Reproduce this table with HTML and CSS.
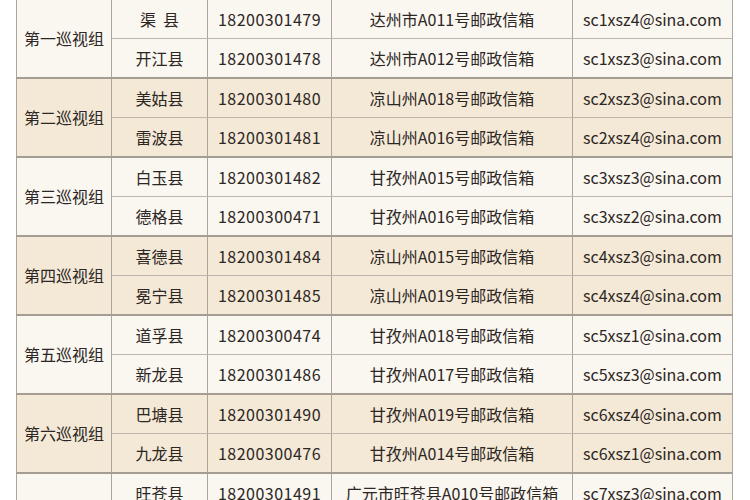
FILE: index.html
```html
<!DOCTYPE html>
<html lang="zh-CN">
<head>
<meta charset="utf-8">
<title>巡视组联系方式</title>
<link rel="stylesheet" href="styles.css">
</head>
<body>
<table class="tbl">
  <colgroup>
    <col class="c1"><col class="c2"><col class="c3"><col class="c4"><col class="c5">
  </colgroup>
  <tbody class="g odd">
    <tr><td rowspan="2">第一巡视组</td><td>渠&nbsp;&nbsp;县</td><td class="num">18200301479</td><td>达州市A011号邮政信箱</td><td>sc1xsz4@sina.com</td></tr>
    <tr><td>开江县</td><td class="num">18200301478</td><td>达州市A012号邮政信箱</td><td>sc1xsz3@sina.com</td></tr>
  </tbody>
  <tbody class="g even">
    <tr><td rowspan="2">第二巡视组</td><td>美姑县</td><td class="num">18200301480</td><td>凉山州A018号邮政信箱</td><td>sc2xsz3@sina.com</td></tr>
    <tr><td>雷波县</td><td class="num">18200301481</td><td>凉山州A016号邮政信箱</td><td>sc2xsz4@sina.com</td></tr>
  </tbody>
  <tbody class="g odd">
    <tr><td rowspan="2">第三巡视组</td><td>白玉县</td><td class="num">18200301482</td><td>甘孜州A015号邮政信箱</td><td>sc3xsz3@sina.com</td></tr>
    <tr><td>德格县</td><td class="num">18200300471</td><td>甘孜州A016号邮政信箱</td><td>sc3xsz2@sina.com</td></tr>
  </tbody>
  <tbody class="g even">
    <tr><td rowspan="2">第四巡视组</td><td>喜德县</td><td class="num">18200301484</td><td>凉山州A015号邮政信箱</td><td>sc4xsz3@sina.com</td></tr>
    <tr><td>冕宁县</td><td class="num">18200301485</td><td>凉山州A019号邮政信箱</td><td>sc4xsz4@sina.com</td></tr>
  </tbody>
  <tbody class="g odd">
    <tr><td rowspan="2">第五巡视组</td><td>道孚县</td><td class="num">18200300474</td><td>甘孜州A018号邮政信箱</td><td>sc5xsz1@sina.com</td></tr>
    <tr><td>新龙县</td><td class="num">18200301486</td><td>甘孜州A017号邮政信箱</td><td>sc5xsz3@sina.com</td></tr>
  </tbody>
  <tbody class="g even">
    <tr><td rowspan="2">第六巡视组</td><td>巴塘县</td><td class="num">18200301490</td><td>甘孜州A019号邮政信箱</td><td>sc6xsz4@sina.com</td></tr>
    <tr><td>九龙县</td><td class="num">18200300476</td><td>甘孜州A014号邮政信箱</td><td>sc6xsz1@sina.com</td></tr>
  </tbody>
  <tbody class="g odd">
    <tr><td rowspan="2">第七巡视组</td><td>旺苍县</td><td class="num">18200301491</td><td>广元市旺苍县A010号邮政信箱</td><td>sc7xsz3@sina.com</td></tr>
    <tr><td>苍溪县</td><td class="num">18200301492</td><td>广元市苍溪县A011号邮政信箱</td><td>sc7xsz4@sina.com</td></tr>
  </tbody>
</table>
</body>
</html>
```

FILE: styles.css
```css
html, body {
  margin: 0;
  padding: 0;
  background: #ffffff;
}
body {
  padding-left: 16px;
  overflow: hidden;
  font-family: "Noto Sans CJK SC", "Noto Sans", sans-serif;
}
.tbl {
  margin-top: -2.5px;
  width: 716px;
  border-collapse: collapse;
  table-layout: fixed;
  font-size: 16px;
  color: #2c2724;
}
.c1 { width: 95px; }
.c2 { width: 96px; }
.c3 { width: 124px; }
.c4 { width: 241px; }
.c5 { width: 160px; }
.tbl td {
  height: 38px;
  padding: 0;
  text-align: center;
  vertical-align: middle;
  border-left: 1px solid #aaa59d;
  border-right: 1px solid #aaa59d;
  border-top: 1px solid #bcb6ac;
  border-bottom: 1px solid #bcb6ac;
  white-space: nowrap;
  line-height: 20px;
}
.tbl td.num {
  letter-spacing: 0.5px;
}
.g {
  border-top: 2px solid #a39d94;
}
.g.odd td { background: #faf6f0; }
.g.even td { background: #f4e9d6; }
```
